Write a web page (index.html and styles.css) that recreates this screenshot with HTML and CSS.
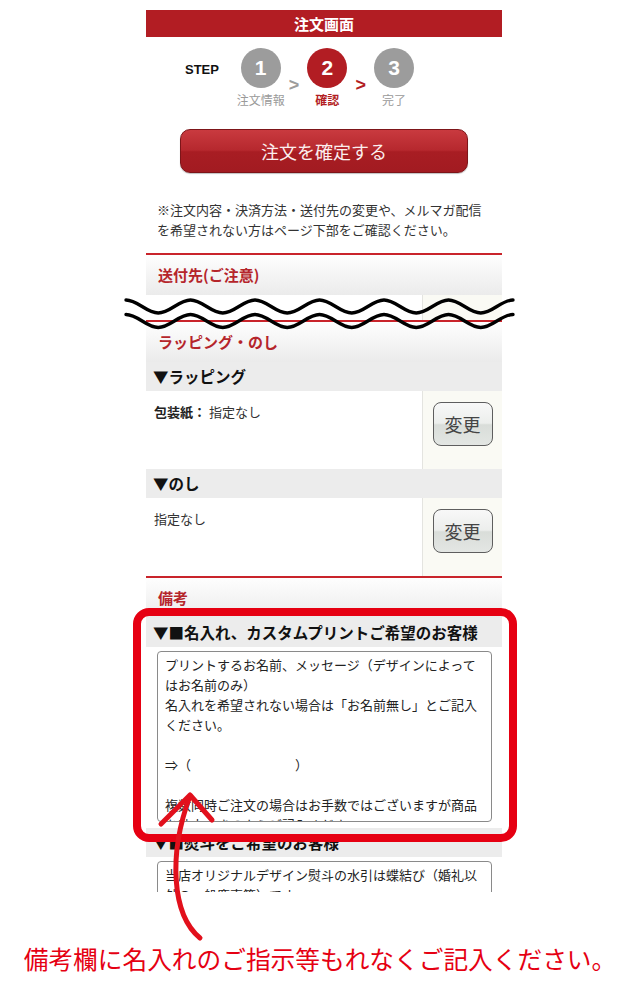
FILE: index.html
```html
<!DOCTYPE html>
<html lang="ja">
<head>
<meta charset="utf-8">
<title>注文画面</title>
<link rel="stylesheet" href="styles.css">
</head>
<body>
<div class="page">
  <div class="main">
    <div class="frame">
      <div class="titlebar">注文画面</div>
      <div class="steps">
        <div class="step-label">STEP</div>
        <div class="step"><div class="circle">1</div><div class="cap">注文情報</div></div>
        <div class="sep">&gt;</div>
        <div class="step active"><div class="circle">2</div><div class="cap">確認</div></div>
        <div class="sep active">&gt;</div>
        <div class="step"><div class="circle">3</div><div class="cap">完了</div></div>
      </div>
      <div class="confirm">注文を確定する</div>
      <p class="note">※注文内容・決済方法・送付先の変更や、メルマガ配信<br>を希望されない方はページ下部をご確認ください。</p>

      <section class="sec sec1">
        <h2 class="sec-head">送付先(ご注意)</h2>
        <div class="row cut"><div class="cell-l"></div><div class="cell-r"></div></div>
      </section>

      <section class="sec">
        <h2 class="sec-head">ラッピング・のし</h2>
        <h3 class="sub">▼ラッピング</h3>
        <div class="row">
          <div class="cell-l"><b class="lbl">包装紙：</b> 指定なし</div>
          <div class="cell-r"><span class="chg">変更</span></div>
        </div>
        <h3 class="sub">▼のし</h3>
        <div class="row">
          <div class="cell-l">指定なし</div>
          <div class="cell-r"><span class="chg">変更</span></div>
        </div>
      </section>

      <section class="sec">
        <h2 class="sec-head">備考</h2>
        <h3 class="sub">▼■名入れ、カスタムプリントご希望のお客様</h3>
        <div class="ta-cell">
          <div class="ta">プリントするお名前、メッセージ（デザインによって<br>はお名前のみ）<br>名入れを希望されない場合は「お名前無し」とご記入<br>ください。<br><br>⇒（　　　　　　　　）<br><br>複数同時ご注文の場合はお手数ではございますが商品<br>を特定できるようご記入ください。</div>
        </div>
        <h3 class="sub">▼■熨斗をご希望のお客様</h3>
        <div class="ta-cell">
          <div class="ta">当店オリジナルデザイン熨斗の水引は蝶結び（婚礼以<br>外の一般慶事等）です。</div>
        </div>
      </section>
    </div>
  </div>
  <p class="callout">備考欄に名入れのご指示等もれなくご記入ください。</p>

  <svg class="overlay" width="640" height="998" viewBox="0 0 640 998" aria-hidden="true">
    <path class="wave" d="M126,300 c11.6,0 20.64,13 32.25,13 s20.64,-13 32.25,-13 s20.64,13 32.25,13 s20.64,-13 32.25,-13 s20.64,13 32.25,13 s20.64,-13 32.25,-13 s20.64,13 32.25,13 s20.64,-13 32.25,-13 s20.64,13 32.25,13 s20.64,-13 32.25,-13 s20.64,13 32.25,13 s20.64,-13 32.25,-13"/>
    <path class="wave" d="M126,314.5 c11.6,0 20.64,13 32.25,13 s20.64,-13 32.25,-13 s20.64,13 32.25,13 s20.64,-13 32.25,-13 s20.64,13 32.25,13 s20.64,-13 32.25,-13 s20.64,13 32.25,13 s20.64,-13 32.25,-13 s20.64,13 32.25,13 s20.64,-13 32.25,-13 s20.64,13 32.25,13 s20.64,-13 32.25,-13"/>
    <rect class="redbox" x="137" y="612" width="376" height="226" rx="12" ry="12"/>
    <path class="arrow" d="M200,938 C172,915 168,855 190,796"/>
    <path class="arrow" d="M161,824 L190,795 L212,820"/>
  </svg>
</div>
</body>
</html>
```

FILE: styles.css
```css
* { box-sizing: border-box; }

body {
  margin: 0;
  background: #fff;
  font-family: "Noto Sans CJK JP", "Noto Sans", sans-serif;
  color: #222;
}

.page {
  position: relative;
  width: 640px;
  height: 998px;
  overflow: hidden;
}

.main {
  height: 892px;
  overflow: hidden;
}

.frame {
  width: 356px;
  margin-left: 146px;
}

.titlebar {
  margin-top: 10px;
  height: 27px;
  background: #b21d23;
  color: #fff;
  font-weight: 700;
  font-size: 15px;
  line-height: 27px;
  text-align: center;
}

/* steps */
.steps {
  display: flex;
  align-items: flex-start;
  margin-top: 11px;
  padding-left: 39px;
  height: 62px;
}

.step-label {
  width: 55.7px;
  padding-top: 14px;
  font-family: "Liberation Sans", Arial, sans-serif;
  font-weight: 700;
  font-size: 13px;
  line-height: 15px;
  color: #111;
}

.step {
  width: 40px;
  display: flex;
  flex-direction: column;
  align-items: center;
}

.circle {
  width: 40px;
  height: 40px;
  border-radius: 50%;
  background: #9c9c9c;
  color: #fff;
  font-family: "Liberation Sans", Arial, sans-serif;
  font-weight: 700;
  font-size: 21px;
  line-height: 40px;
  text-align: center;
}

.step.active .circle { background: #b21d23; }

.cap {
  margin-top: 5px;
  font-size: 12px;
  line-height: 14px;
  color: #9a9a9a;
  white-space: nowrap;
}

.step.active .cap {
  color: #b21d23;
  font-weight: 700;
}

.sep {
  width: 26.7px;
  margin-top: 28px;
  text-align: center;
  font-family: "Liberation Sans", Arial, sans-serif;
  font-weight: 700;
  font-size: 18px;
  line-height: 18px;
  color: #9c9c9c;
}

.sep.active { color: #b21d23; }

/* confirm button */
.confirm {
  width: 288px;
  height: 44px;
  margin: 19px auto 0;
  border: 1px solid #7d1519;
  border-radius: 10px;
  background: linear-gradient(#c93a3f, #b6282e 48%, #a81d23 52%, #a21b21);
  box-shadow: 0 1px 1px rgba(0, 0, 0, 0.25);
  color: #fbeeee;
  font-size: 18px;
  line-height: 42px;
  text-align: center;
}

.note {
  margin: 27px 0 0;
  padding-left: 11px;
  font-size: 13px;
  line-height: 20px;
  color: #333;
}

/* sections */
.sec1 { margin-top: 13px; }

.sec-head {
  margin: 0;
  height: 42px;
  border-top: 2px solid #c9242b;
  background: linear-gradient(#fefefe, #ebebeb);
  padding-left: 12px;
  font-size: 15px;
  font-weight: 700;
  line-height: 40px;
  color: #b5252b;
}

.sub {
  margin: 0;
  height: 29px;
  background: #ececec;
  padding-left: 7px;
  font-size: 15.5px;
  font-weight: 700;
  line-height: 29px;
  color: #111;
  white-space: nowrap;
}

.row {
  display: flex;
  height: 78px;
}

.row.cut { height: 25px; }

.cell-l {
  flex: 1;
  padding: 11px 0 0 8px;
  font-size: 13px;
  line-height: 20px;
  color: #333;
}

.lbl {
  font-weight: 700;
  color: #222;
}

.cell-r {
  width: 80px;
  background: #fafaf4;
  border-left: 1px solid #e4e4e0;
  display: flex;
  justify-content: center;
  align-items: flex-start;
  padding-top: 11px;
}

.chg {
  display: block;
  width: 60px;
  height: 44px;
  border: 1px solid #5e5e5e;
  border-radius: 8px;
  background: linear-gradient(#f8f8f8, #eceeec 48%, #d9ddd9 52%, #e3e6e3);
  font-size: 18px;
  line-height: 42px;
  text-align: center;
  color: #444;
}

.ta-cell {
  padding: 4px 10px 6px 11px;
}

.ta {
  height: 171px;
  border: 1px solid #8a8a8a;
  border-radius: 4px;
  padding: 3px 7px;
  font-size: 13px;
  line-height: 20px;
  color: #222;
  overflow: hidden;
  white-space: nowrap;
}

.callout {
  margin: 49px 0 0;
  text-align: center;
  font-size: 24.7px;
  line-height: 34px;
  color: #e50012;
  white-space: nowrap;
}

/* overlays */
.overlay {
  position: absolute;
  left: 0;
  top: 0;
  pointer-events: none;
}

.wave {
  fill: none;
  stroke: #000;
  stroke-width: 3.4;
  stroke-linecap: round;
}

.redbox {
  fill: none;
  stroke: #e60012;
  stroke-width: 8;
}

.arrow {
  fill: none;
  stroke: #e2101c;
  stroke-width: 5;
  stroke-linecap: round;
  stroke-linejoin: round;
}
```
